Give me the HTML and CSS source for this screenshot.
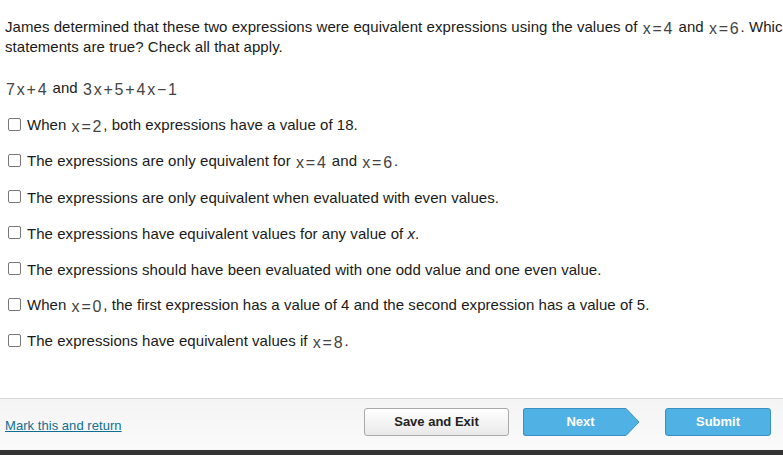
FILE: index.html
```html
<!DOCTYPE html>
<html>
<head>
<meta charset="utf-8">
<link rel="stylesheet" href="styles.css">
</head>
<body>
<div class="page">
  <div class="content">
    <p class="prompt">James determined that these two expressions were equivalent expressions using the values of <span class="m">x=4</span> and <span class="m">x=6</span>. Which statements are true? Check all that apply.</p>
    <p class="expr"><span class="m">7x+4</span> and <span class="m">3x+5+4x−1</span></p>
    <ul class="options">
      <li><span class="box"></span><span>When <span class="m">x=2</span>, both expressions have a value of 18.</span></li>
      <li><span class="box"></span><span>The expressions are only equivalent for <span class="m">x=4</span> and <span class="m">x=6</span>.</span></li>
      <li><span class="box"></span><span>The expressions are only equivalent when evaluated with even values.</span></li>
      <li><span class="box"></span><span>The expressions have equivalent values for any value of <i>x</i>.</span></li>
      <li><span class="box"></span><span>The expressions should have been evaluated with one odd value and one even value.</span></li>
      <li><span class="box"></span><span>When <span class="m">x=0</span>, the first expression has a value of 4 and the second expression has a value of 5.</span></li>
      <li><span class="box"></span><span>The expressions have equivalent values if <span class="m">x=8</span>.</span></li>
    </ul>
  </div>
  <div class="footer">
    <a class="mark" href="#">Mark this and return</a>
    <div class="buttons">
      <button class="btn save">Save and Exit</button>
      <button class="btn next">Next
        <svg class="arrow" width="16" height="28" viewBox="0 0 16 28"><path d="M0 0.5 L2 0.5 L15 14 L2 27.5 L0 27.5 Z" fill="#4fb1e4" stroke="#3a8fc0" stroke-width="1"/><rect x="0" y="1" width="2" height="26" fill="#4fb1e4"/></svg>
      </button>
      <button class="btn submit">Submit</button>
    </div>
  </div>
  <div class="bottombar"></div>
</div>
</body>
</html>
```

FILE: styles.css
```css
html, body {
  margin: 0;
  padding: 0;
  background: #ffffff;
}
body {
  font-family: "Liberation Sans", Arial, sans-serif;
  font-size: 15px;
  letter-spacing: 0.05px;
  color: #1a1a1a;
  width: 783px;
  height: 455px;
  overflow: hidden;
}
.page {
  display: flex;
  flex-direction: column;
  height: 455px;
}
.content {
  flex: 1;
  padding: 17px 0 0 5px;
  white-space: nowrap;
}
.prompt {
  margin: 0;
  line-height: 20px;
  white-space: normal;
  width: 800px;
}
.m {
  font-family: "Liberation Sans", Arial, sans-serif;
  font-size: 16px;
  letter-spacing: 1.8px;
  color: #444;
  position: relative;
  top: 2px;
  padding-left: 1px;
}
.expr {
  margin: 21px 0 0 0;
  line-height: 20px;
}
.options {
  list-style: none;
  margin: 9px 0 0 0;
  padding: 0;
}
.options li {
  display: flex;
  align-items: center;
  height: 36px;
  gap: 6px;
  padding-left: 3px;
}
.box {
  width: 11px;
  height: 11px;
  border: 1px solid #777;
  border-radius: 2px;
  background: #fff;
  flex: none;
  position: relative;
  top: -1px;
}
.footer {
  height: 51px;
  border-top: 1px solid #d6d6d6;
  background: linear-gradient(#f4f4f4, #fafafa);
  display: flex;
  align-items: center;
  justify-content: space-between;
  padding: 0 12px 0 5px;
}
.mark {
  color: #0e6f92;
  font-size: 13px;
  text-decoration: underline;
  margin-top: 2px;
}
.buttons {
  display: flex;
  align-items: center;
  margin-top: -6px;
}
.btn {
  font-family: "Liberation Sans", Arial, sans-serif;
  font-weight: bold;
  font-size: 13px;
  height: 28px;
  border-radius: 3px;
  padding: 0;
}
.save {
  width: 145px;
  background: linear-gradient(#ffffff, #e9e9e9);
  border: 1px solid #a9a9a9;
  color: #222;
  margin-right: 14px;
}
.next {
  width: 101px;
  background: #4fb1e4;
  border: 1px solid #3a8fc0;
  border-right: none;
  border-radius: 3px 0 0 3px;
  color: #fff;
  position: relative;
  margin-right: 41px;
  padding-left: 13px;
}
.arrow {
  position: absolute;
  left: 100px;
  top: -1px;
}
.submit {
  width: 106px;
  background: #4fb1e4;
  border: 1px solid #3a8fc0;
  color: #fff;
}
.bottombar {
  height: 5px;
  background: #333333;
}
```
